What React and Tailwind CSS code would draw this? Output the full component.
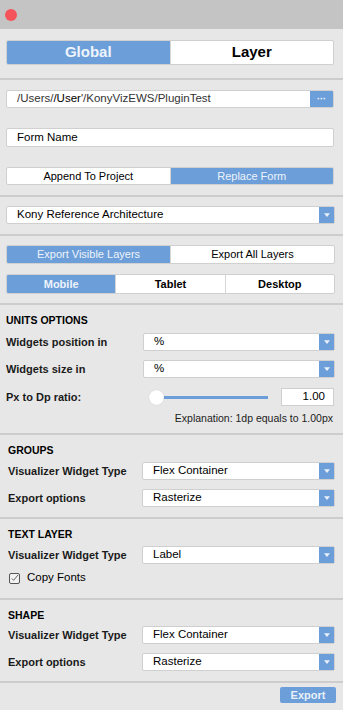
import { useState } from 'react';

const font = { fontFamily: '"Liberation Sans", Arial, sans-serif' };

function Segmented({ items, active, className = '' }) {
  return (
    <div className={'flex overflow-hidden rounded-[2px] border border-[#d0d0d0] bg-white ' + className}>
      {items.map((it, i) => (
        <div
          key={it}
          className={
            'flex flex-1 items-center justify-center ' +
            (i > 0 ? 'border-l border-[#d6d6d6] ' : '') +
            (i === active ? 'bg-[#6c9ed9] text-[#eef4fb]' : 'text-black')
          }
        >
          {it}
        </div>
      ))}
    </div>
  );
}

function Select({ value, className = '' }) {
  return (
    <div className={'flex h-[18px] items-stretch rounded-[2px] border border-[#cfcfcf] bg-white ' + className}>
      <div className="flex flex-1 items-center pl-[10px] text-[11.5px] text-black">{value}</div>
      <div className="flex w-[15px] items-center justify-center bg-[#6c9ed9]">
        <svg viewBox="0 0 8 5" className="h-[4px] w-[6px]" aria-hidden="true">
          <path d="M0 0h8L4 5z" fill="#e9f0fa" />
        </svg>
      </div>
    </div>
  );
}

function Sep() {
  return <div className="h-[2px] shrink-0 bg-[#cdcdcd]" />;
}

function Row({ label, value, mt }) {
  return (
    <div className={'flex h-[18px] items-center ' + mt}>
      <span className="w-[136px] pl-[2px] text-[11px] font-bold leading-[14px] text-[#1a1a1a]">{label}</span>
      <Select value={value} className="flex-1" />
    </div>
  );
}

export default function App() {
  const [ratio] = useState('1.00');
  return (
    <div style={font} className="flex h-[710px] w-[343px] flex-col overflow-hidden bg-[#e7e7e7] text-black">
      <div className="flex h-[29px] shrink-0 items-center bg-[#c4c4c4] pl-[5px]">
        <div className="h-[12px] w-[12px] rounded-full bg-[#f5545a]" />
      </div>

      <div className="shrink-0 pl-[6px] pr-[9px] pt-[11px] pb-[13px]">
        <Segmented items={['Global', 'Layer']} active={0} className="h-[25px] text-[15px] font-bold" />
      </div>
      <Sep />

      <div className="shrink-0 pl-[6px] pr-[9px] pt-[10px] pb-[10px]">
        <div className="flex h-[18px] items-stretch overflow-hidden rounded-[2px] border border-[#d0d0d0] bg-white">
          <div className="flex flex-1 items-center pl-[10px] text-[11.5px] text-[#333]">/Users/<span className="text-black">/User</span>'/KonyVizEWS/PluginTest</div>
          <div className="flex w-[23px] items-center justify-center bg-[#6c9ed9] text-[9px] font-bold leading-none text-white">···</div>
        </div>
        <div className="mt-[20px] flex h-[19px] items-center rounded-[2px] border border-[#d0d0d0] bg-white pl-[10px] text-[11.5px]">
          Form Name
        </div>
        <Segmented items={['Append To Project', 'Replace Form']} active={1} className="mt-[20px] h-[18px] text-[11px]" />
      </div>
      <Sep />

      <div className="shrink-0 pl-[6px] pr-[8px] pt-[9px] pb-[10px]">
        <Select value="Kony Reference Architecture" />
      </div>
      <Sep />

      <div className="shrink-0 pl-[6px] pr-[8px] pt-[9px] pb-[9px]">
        <Segmented items={['Export Visible Layers', 'Export All Layers']} active={0} className="h-[19px] text-[11px]" />
        <Segmented items={['Mobile', 'Tablet', 'Desktop']} active={0} className="mt-[10px] h-[20px] text-[11px] font-bold" />
      </div>
      <Sep />

      <div className="shrink-0 pl-[4px] pr-[8px] pt-[8px] pb-[8px]">
        <div className="pl-[2px] text-[10.5px] font-bold leading-[14px]">UNITS OPTIONS</div>
        <div className="mt-[6px] flex h-[18px] items-center">
          <span className="w-[139px] pl-[2px] text-[11px] font-bold leading-[14px] text-[#1a1a1a]">Widgets position in</span>
          <Select value="%" className="flex-1" />
        </div>
        <div className="mt-[9px] flex h-[18px] items-center">
          <span className="w-[139px] pl-[2px] text-[11px] font-bold leading-[14px] text-[#1a1a1a]">Widgets size in</span>
          <Select value="%" className="flex-1" />
        </div>
        <div className="mt-[10px] flex h-[18px] items-center">
          <span className="w-[140px] pl-[2px] text-[11px] font-bold leading-[14px] text-[#1a1a1a]">Px to Dp ratio:</span>
          <div className="relative flex h-[18px] w-[124px] items-center">
            <div className="ml-[10px] h-[3px] flex-1 bg-[#6c9ed9]" />
            <div className="absolute left-[5px] top-[2px] h-[15px] w-[15px] rounded-full bg-white shadow-[0_0_1px_rgba(0,0,0,0.2)]" />
          </div>
          <div className="ml-[13px] flex h-[18px] w-[53px] items-center justify-end border border-[#cfcfcf] bg-white pr-[8px] text-[11.5px]">
            {ratio}
          </div>
        </div>
        <div className="mt-[5px] pr-[2px] text-right text-[10.5px] leading-[14px] text-[#222]">Explanation: 1dp equals to 1.00px</div>
      </div>
      <Sep />

      <div className="shrink-0 pl-[6px] pr-[8px] pt-[8px] pb-[10px]">
        <div className="pl-[2px] text-[10.5px] font-bold leading-[14px]">GROUPS</div>
        <Row label="Visualizer Widget Type" value="Flex Container" mt="mt-[5px]" />
        <Row label="Export options" value="Rasterize" mt="mt-[9px]" />
      </div>
      <Sep />

      <div className="shrink-0 pl-[6px] pr-[8px] pt-[8px] pb-[13px]">
        <div className="pl-[2px] text-[10.5px] font-bold leading-[14px]">TEXT LAYER</div>
        <Row label="Visualizer Widget Type" value="Label" mt="mt-[5px]" />
        <div className="mt-[7px] flex h-[14px] items-center pl-[3px]">
          <div className="flex h-[11px] w-[11px] items-center justify-center rounded-[2px] border border-[#555] bg-[#f2f2f2]">
            <svg viewBox="0 0 10 10" className="h-[9px] w-[9px]" aria-hidden="true">
              <path d="M2 5l2 2 5-6" fill="none" stroke="#555" strokeWidth="1" />
            </svg>
          </div>
          <span className="ml-[7px] text-[11.5px]">Copy Fonts</span>
        </div>
      </div>
      <Sep />

      <div className="shrink-0 pl-[6px] pr-[8px] pt-[8px] pb-[10px]">
        <div className="pl-[2px] text-[10.5px] font-bold leading-[14px]">SHAPE</div>
        <Row label="Visualizer Widget Type" value="Flex Container" mt="mt-[4px]" />
        <Row label="Export options" value="Rasterize" mt="mt-[9px]" />
      </div>
      <Sep />

      <div className="flex shrink-0 justify-end pr-[7px] pt-[4px]">
        <div className="flex h-[16px] w-[56px] items-center justify-center rounded-[2px] bg-[#6c9ed9] text-[11px] font-bold text-[#e9f0fa]">
          Export
        </div>
      </div>
    </div>
  );
}
